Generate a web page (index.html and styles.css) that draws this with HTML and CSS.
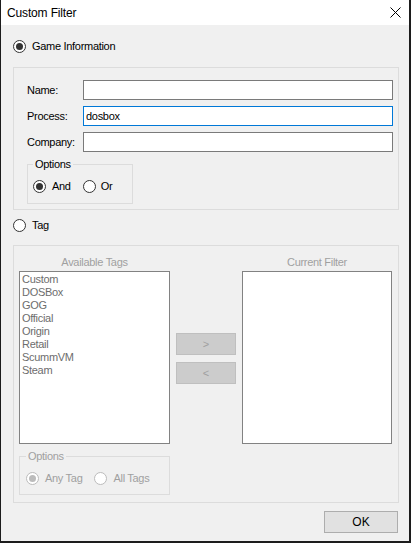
FILE: index.html
```html
<!DOCTYPE html>
<html>
<head>
<meta charset="utf-8">
<title>Custom Filter</title>
<link rel="stylesheet" href="styles.css">
</head>
<body>
<div class="window">
  <div class="titlebar">
    <span class="title">Custom Filter</span>
    <svg class="close" width="11" height="11" viewBox="0 0 11 11"><path d="M0.5 0.5 L10.5 10.5 M10.5 0.5 L0.5 10.5" stroke="#000" stroke-width="1" fill="none"/></svg>
  </div>
  <div class="content">
    <div class="radio-row first"><span class="radio checked"></span><span>Game Information</span></div>
    <div class="group info">
      <div class="field"><span class="lbl">Name:</span><input type="text" value=""></div>
      <div class="field"><span class="lbl">Process:</span><input type="text" class="focus" value="dosbox"></div>
      <div class="field"><span class="lbl">Company:</span><input type="text" value=""></div>
      <fieldset class="opts opts-info">
        <legend>Options</legend>
        <div class="opts-row">
          <span class="opt"><span class="radio checked"></span><span>And</span></span>
          <span class="opt"><span class="radio"></span><span>Or</span></span>
        </div>
      </fieldset>
    </div>
    <div class="radio-row tag"><span class="radio"></span><span>Tag</span></div>
    <div class="group tags">
      <div class="col-title">Available Tags</div>
      <div></div>
      <div class="col-title">Current Filter</div>
      <div class="list">
        <div>Custom</div>
        <div>DOSBox</div>
        <div>GOG</div>
        <div>Official</div>
        <div>Origin</div>
        <div>Retail</div>
        <div>ScummVM</div>
        <div>Steam</div>
      </div>
      <div class="movers">
        <button class="mover">&gt;</button>
        <button class="mover">&lt;</button>
      </div>
      <div class="list"></div>
      <fieldset class="opts opts-tags disabled">
        <legend>Options</legend>
        <div class="opts-row">
          <span class="opt"><span class="radio checked"></span><span>Any Tag</span></span>
          <span class="opt"><span class="radio"></span><span>All Tags</span></span>
        </div>
      </fieldset>
    </div>
    <div class="footer"><button class="ok">OK</button></div>
  </div>
</div>
</body>
</html>
```

FILE: styles.css
```css
html, body {
  margin: 0;
  padding: 0;
  background: #f0f0f0;
}
body {
  font-family: "Liberation Sans", Arial, sans-serif;
  font-size: 11px;
  letter-spacing: -0.3px;
  color: #000;
}
.window {
  width: 411px;
  height: 543px;
  box-sizing: border-box;
  border-left: 1px solid #1c1c1c;
  border-right: 2px solid #1c1c1c;
  border-bottom: 2px solid #1c1c1c;
  background: #f0f0f0;
  display: flex;
  flex-direction: column;
}
.titlebar {
  height: 25px;
  background: #fff;
  display: flex;
  align-items: center;
  justify-content: space-between;
  padding: 0 8px 0 6px;
  flex: none;
}
.title {
  font-size: 12px;
  letter-spacing: -0.15px;
}
.close {
  display: block;
}
.content {
  flex: 1;
  display: flex;
  flex-direction: column;
  padding: 0 10px 0 12px;
}
.radio-row {
  display: flex;
  align-items: center;
  gap: 6px;
  height: 16px;
}
.radio-row.first {
  margin-top: 13px;
}
.radio-row.tag {
  margin-top: 7px;
}
.radio {
  width: 13px;
  height: 13px;
  box-sizing: border-box;
  border: 1px solid #333;
  border-radius: 50%;
  background: #fff;
  display: flex;
  align-items: center;
  justify-content: center;
  flex: none;
}
.radio.checked::after {
  content: "";
  width: 7px;
  height: 7px;
  border-radius: 50%;
  background: #333;
}
.group {
  border: 1px solid #dcdcdc;
}
.group.info {
  margin-top: 13px;
  padding: 12px 5px 5px 13px;
  display: flex;
  flex-direction: column;
  gap: 6px;
}
.field {
  display: flex;
  align-items: center;
  height: 20px;
}
.lbl {
  width: 56px;
  flex: none;
}
.field input {
  flex: 1;
  min-width: 0;
  height: 20px;
  box-sizing: border-box;
  margin: 0;
  border: 1px solid #7a7a7a;
  padding: 0 2px;
  font: inherit;
  letter-spacing: inherit;
  color: #000;
  background: #fff;
  outline: none;
}
.field input.focus {
  border-color: #0078d7;
}
.opts {
  margin: 0;
  border: 1px solid #dcdcdc;
  box-sizing: border-box;
  min-width: 0;
}
.opts legend {
  padding: 0 2px;
  margin-left: 0;
  line-height: 13px;
}
.opts-info {
  width: 106px;
  padding: 7px 0 9px 5px;
  align-self: flex-start;
}
.opts-row {
  display: flex;
  align-items: center;
  height: 16px;
}
.opt {
  display: flex;
  align-items: center;
  gap: 6px;
}
.opts-info .opt + .opt {
  margin-left: 12px;
  gap: 5px;
}
.group.tags {
  margin-top: 12px;
  padding: 9px 5px 7px 5px;
  display: grid;
  grid-template-columns: 151px 60px 150px;
  grid-template-rows: 14px 173px auto;
  column-gap: 6px;
  row-gap: 2px;
}
.col-title {
  text-align: center;
  line-height: 14px;
  color: #a0a0a0;
}
.list {
  background: #fff;
  border: 1px solid #828282;
  box-sizing: border-box;
  padding: 1px 2px;
  line-height: 13px;
  color: #6d6d6d;
}
.movers {
  display: flex;
  flex-direction: column;
  gap: 7px;
  padding-top: 62px;
}
.mover {
  width: 60px;
  height: 22px;
  margin: 0;
  padding: 0;
  background: #cccccc;
  border: 1px solid #bfbfbf;
  color: #a0a0a0;
  font: inherit;
}
.opts-tags {
  grid-column: 1;
  margin-top: 4px;
  width: 151px;
  padding: 7px 0 8px 6px;
}
.disabled {
  color: #a0a0a0;
}
.disabled .radio {
  border-color: #bcbcbc;
}
.disabled .radio.checked::after {
  background: #bcbcbc;
}
.opts-tags .opt + .opt {
  margin-left: 12px;
}
.footer {
  display: flex;
  justify-content: flex-end;
  margin-top: 8px;
}
.ok {
  width: 74px;
  height: 22px;
  margin: 0 1px 0 0;
  padding: 0;
  background: #e1e1e1;
  border: 1px solid #adadad;
  font-family: "Liberation Sans", Arial, sans-serif;
  font-size: 12px;
  color: #000;
}
```
